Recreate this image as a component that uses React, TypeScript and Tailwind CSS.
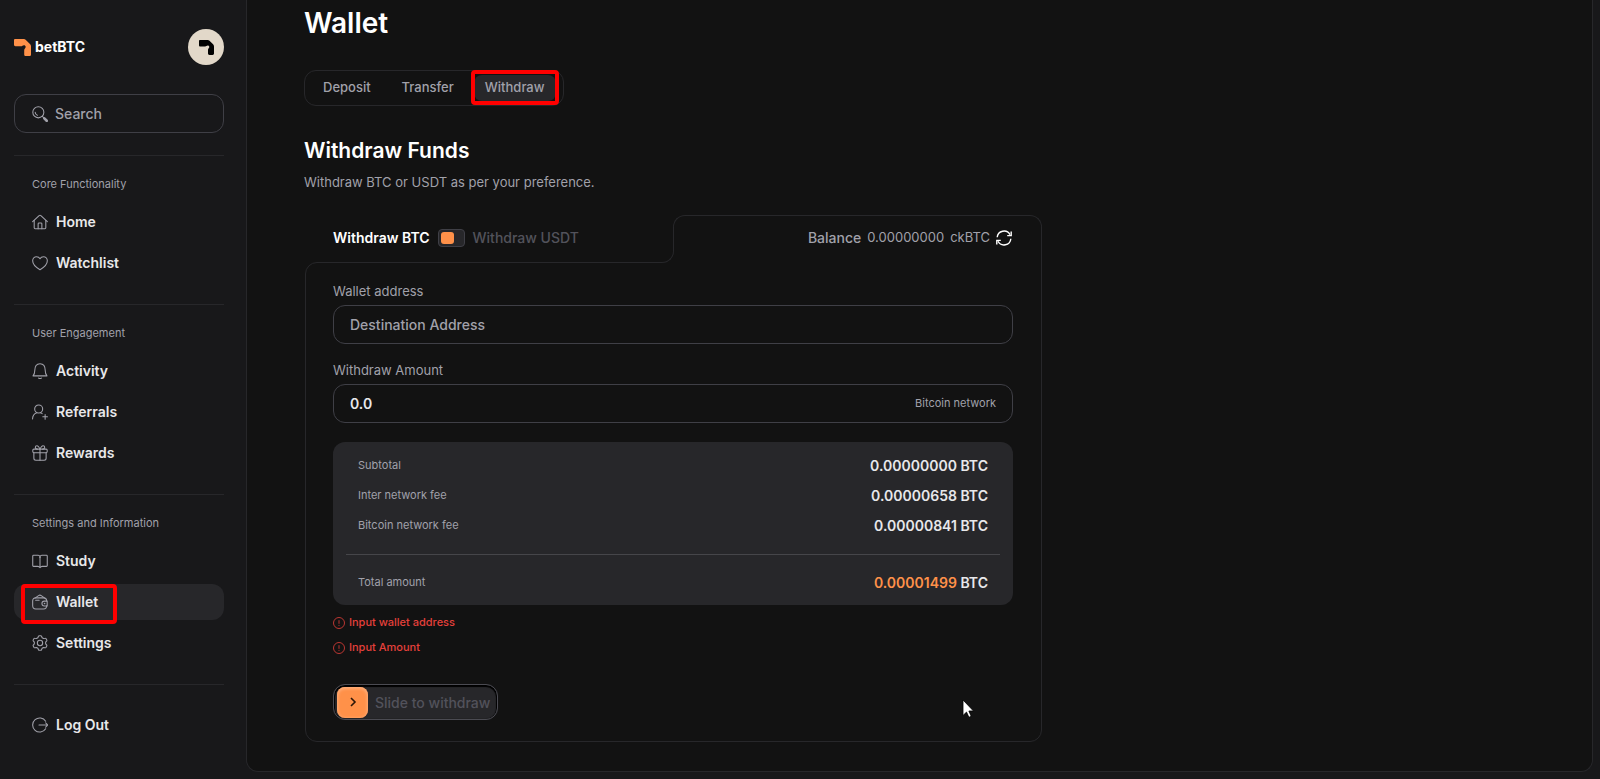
import type { ReactNode } from "react";

type IconProps = { className?: string };

function Stroke({ className = "size-4", children }: IconProps & { children: ReactNode }) {
  return (
    <svg
      viewBox="0 0 24 24"
      fill="none"
      stroke="currentColor"
      strokeWidth="1.6"
      strokeLinecap="round"
      strokeLinejoin="round"
      aria-hidden="true"
      className={`${className} shrink-0`}
    >
      {children}
    </svg>
  );
}

const HomeIcon = () => (
  <Stroke>
    <path d="M1 11.5 10.7 2.4a2 2 0 0 1 2.6 0L23 11.5" />
    <path d="M3.3 9.6V20.8c0 .8.6 1.4 1.4 1.4h14.6c.8 0 1.4-.6 1.4-1.4V9.6" />
    <path d="M9.2 22v-7.200c0-.8.6-1.4 1.4-1.4h2.800c.8 0 1.4.6 1.4 1.4V22" />
  </Stroke>
);
const HeartIcon = () => (
  <Stroke>
    <path d="M12 22C8.500 20 1 14.800 1 8.600 1 5.200 3.600 2.500 6.800 2.500c2.200 0 4.200 1.200 5.200 3.100 1-1.900 3-3.100 5.200-3.100 3.200 0 5.800 2.700 5.800 6.100 0 6.200-7.500 11.400-11 13.400Z" />
  </Stroke>
);
const BellIcon = () => (
  <Stroke>
    <path d="M1.500 19.300h21c-2-2-2.700-4.500-2.700-8.300C19.800 5 17.400 1 12 1S4.200 5 4.200 11c0 3.800-.7 6.300-2.700 8.300Z" />
    <path d="M9.800 22.600c1.300.9 3.100.9 4.400 0" />
  </Stroke>
);
const ReferIcon = () => (
  <Stroke>
    <circle cx="10" cy="7.500" r="6" />
    <path d="M.800 22.500c.2-5 3-8 6.400-9.200M12.800 13.300c.9.300 1.700.7 2.400 1.200" />
    <path d="M19.700 15.700v7M16.200 19.200h7" />
  </Stroke>
);
const GiftIcon = () => (
  <Stroke>
    <path d="M2.800 11.500v8.300c0 1.700 1.300 3 3 3h12.400c1.700 0 3-1.300 3-3v-8.300" />
    <rect x="1.200" y="6.200" width="21.600" height="5.300" rx="1.600" />
    <path d="M12 6.200v16.600" />
    <path d="M12 6.200C10.500 2.500 9 1 7.400 1 5.800 1 5 2.100 5 3.300c0 1.700 1.300 2.900 3 2.900M12 6.200C13.500 2.500 15 1 16.600 1 18.200 1 19 2.100 19 3.300c0 1.700-1.300 2.900-3 2.900" />
  </Stroke>
);
const BookIcon = () => (
  <Stroke>
    <path d="M12 6.500c0-1.800-1.300-3-3-3H2.300c-.7 0-1.200.5-1.200 1.200v14.200c0 .7.5 1.200 1.200 1.200h6.200c1.900 0 3 .6 3.500 1.900.5-1.300 1.600-1.900 3.500-1.900h6.200c.7 0 1.200-.5 1.200-1.200V4.700c0-.7-.5-1.200-1.200-1.200H15c-1.700 0-3 1.200-3 3Z" />
    <path d="M12 6.500V21" />
  </Stroke>
);
const WalletIcon = () => (
  <Stroke>
    <path d="M22 10.500c0-3-1.700-4.700-4.700-4.700H5.700C2.700 5.800 1 7.500 1 10.500v7.300c0 3 1.700 4.700 4.700 4.700h11.600c3 0 4.700-1.700 4.700-4.700" />
    <path d="M5 5.800 9.800 2.400c1.200-.8 2.900-.8 4.100 0l4.700 3.400M5.500 9.500h5.200" />
    <path d="M22.800 10.700h-4.300a3.600 3.600 0 0 0 0 7.200h4.300Z" />
    <path d="M18.800 14.300h.1" strokeWidth="2.400" />
  </Stroke>
);
const GearIcon = () => (
  <Stroke>
    <circle cx="12" cy="12" r="4" />
    <path d="M9.700 1.800c.2-.5.700-.8 1.200-.8h2.200c.5 0 1 .3 1.200.8l.9 2.300 2.100 1.200 2.500-.4c.5-.1 1 .2 1.300.6l1.100 1.900c.3.500.2 1-.1 1.400L20.500 10.800v2.400l1.600 2c.3.400.4.900.1 1.400l-1.100 1.900c-.3.400-.8.700-1.300.6l-2.500-.4-2.100 1.200-.9 2.300c-.2.500-.7.800-1.200.8h-2.200c-.5 0-1-.3-1.200-.8l-.9-2.300-2.100-1.200-2.500.4c-.5.100-1-.2-1.300-.6l-1.100-1.900c-.3-.5-.2-1 .1-1.400l1.600-2v-2.400l-1.600-2c-.3-.4-.4-.9-.1-1.400l1.100-1.900c.3-.4.800-.7 1.300-.6l2.500.4 2.100-1.200Z" />
  </Stroke>
);
const LogOutIcon = () => (
  <Stroke>
    <path d="M20.500 6.300A10.600 10.600 0 1 0 20.500 17.700" />
    <path d="M10.500 12h13M20.500 8.700l3.200 3.300-3.200 3.300" />
  </Stroke>
);
const SearchIcon = () => (
  <Stroke>
    <circle cx="9.500" cy="9.500" r="8.300" />
    <path d="M4.800 9.500a4.700 4.700 0 0 0 3.200 4.500" />
    <path d="m15.500 15.500 2 2" />
    <path d="m18.500 18.500 3.600 3.600" strokeWidth="4" />
  </Stroke>
);

function Mark({ className }: IconProps) {
  return (
    <svg viewBox="0 0 18 18" fill="currentColor" aria-hidden="true" className={className}>
      <path d="M1 0h9.500c.7 0 1.300.2 1.800.7l4.600 4.500c.7.7 1.100 1.500 1.100 2.500v8.600c0 1-.7 1.700-1.700 1.700h-3.800c-1 0-1.700-.7-1.700-1.700v-4.300c0-.9.300-1.400.8-2 .9-1 1-2.200.2-2.900-.8-.7-2-.6-2.900.1-.5.400-.9.500-1.500.5H1.500C.6 7.700 0 7.100 0 6.200V1c0-.6.4-1 1-1Z" />
    </svg>
  );
}

const redBox = "pointer-events-none absolute rounded border-4 border-[#ff0000]";

type Item = { name: string; icon: ReactNode; active?: boolean };

const sections: { title: string; items: Item[] }[] = [
  {
    title: "Core Functionality",
    items: [
      { name: "Home", icon: <HomeIcon /> },
      { name: "Watchlist", icon: <HeartIcon /> },
    ],
  },
  {
    title: "User Engagement",
    items: [
      { name: "Activity", icon: <BellIcon /> },
      { name: "Referrals", icon: <ReferIcon /> },
      { name: "Rewards", icon: <GiftIcon /> },
    ],
  },
  {
    title: "Settings and Information",
    items: [
      { name: "Study", icon: <BookIcon /> },
      { name: "Wallet", icon: <WalletIcon />, active: true },
      { name: "Settings", icon: <GearIcon /> },
    ],
  },
];

function NavItem({ name, icon, active }: Item) {
  return (
    <a
      href="#"
      aria-current={active ? "page" : undefined}
      className={`relative flex h-9 items-center gap-2 rounded-xl pl-[18px] text-[14px] leading-5 font-semibold text-[#e8e8ea] ${active ? "bg-[#27272a]" : ""}`}
    >
      <span className="text-[#a1a1aa]">{icon}</span>
      {name}
      {active && <span className={`${redBox} -bottom-1 left-[7px] top-0 w-24`} />}
    </a>
  );
}

function Sidebar() {
  return (
    <aside className="w-[246px] shrink-0 pl-3.5 pr-[22px] pt-[29px]">
      <div className="flex items-center justify-between">
        <a href="#" className="flex items-center gap-1 text-[14px] leading-5 font-bold text-white">
          <Mark className="size-[17px] text-[#ff9149]" />
          betBTC
        </a>
        <button aria-label="Account" className="flex size-9 items-center justify-center rounded-full bg-[#e2d8c9] text-black">
          <Mark className="size-[15px]" />
        </button>
      </div>
      <label className="mt-[29px] flex h-[39px] items-center gap-[7px] rounded-xl border border-[#3f3f46] pl-[17px] text-[#a1a1aa]">
        <SearchIcon />
        <input
          type="search"
          aria-label="Search"
          placeholder="Search"
          className="w-full min-w-0 bg-transparent text-[14px] font-medium outline-none placeholder:text-[#a1a1aa]"
        />
      </label>
      <nav className="mt-[22px]">
        {sections.map((s) => (
          <section key={s.title} className="border-t border-[#27272a] pb-[23px] pt-5">
            <h2 className="mb-[11px] pl-[18px] text-[11px] leading-[17px] text-[#a1a1aa]">{s.title}</h2>
            <div className="flex flex-col gap-[5px]">
              {s.items.map((i) => (
                <NavItem key={i.name} {...i} />
              ))}
            </div>
          </section>
        ))}
        <div className="border-t border-[#27272a] pt-[22px]">
          <NavItem name="Log Out" icon={<LogOutIcon />} />
        </div>
      </nav>
    </aside>
  );
}

function Tabs() {
  return (
    <div role="tablist" className="mt-[31px] flex h-9 w-fit items-center gap-[9px] rounded-xl border border-[#27272a] px-[7px] text-[13px] font-medium text-[#a1a1aa]">
      <button role="tab" className="h-[26px] rounded-lg px-[11px]">Deposit</button>
      <button role="tab" className="h-[26px] rounded-lg px-[11px]">Transfer</button>
      <button role="tab" aria-selected="true" className="relative h-[26px] rounded-lg bg-[#27272a] px-[11px]">
        Withdraw
        <span className={`${redBox} -inset-x-[3px] -bottom-1 -top-[5px]`} />
      </button>
    </div>
  );
}

const fees = [
  { label: "Subtotal", value: "0.00000000" },
  { label: "Inter network fee", value: "0.00000658" },
  { label: "Bitcoin network fee", value: "0.00000841" },
];

function Row({ label, value, accent }: { label: string; value: string; accent?: boolean }) {
  return (
    <div className="flex h-[30px] items-center justify-between px-3">
      <dt className="text-[11px] text-[#a1a1aa]">{label}</dt>
      <dd className="text-[14px] font-semibold text-[#e8e8ea]">
        <span className={accent ? "text-[#ff9149]" : ""}>{value}</span> BTC
      </dd>
    </div>
  );
}

function FormError({ children }: { children: ReactNode }) {
  return (
    <p className="flex h-[25px] items-center gap-1 text-[11px] font-medium text-[#e5403b]">
      <svg viewBox="0 0 12 12" fill="none" stroke="currentColor" strokeWidth="0.8" aria-hidden="true" className="size-3">
        <circle cx="6" cy="6" r="5.500" />
        <path d="M6 3.200v3.600M6 7.900v1" />
      </svg>
      {children}
    </p>
  );
}

function WithdrawCard() {
  return (
    <form className="ml-px mt-[23px] max-w-[737px]">
      <div className="flex h-[47px]">
        <div className="flex flex-1 items-end">
          <div className="flex h-full flex-1 items-center pb-0.5 pl-7 text-[14px]">
            <span className="font-semibold text-white">Withdraw BTC</span>
            <button
              type="button"
              role="switch"
              aria-checked="false"
              aria-label="Withdraw USDT"
              className="mx-2 flex h-[18px] w-[27px] items-center rounded border border-[#3f3f46] bg-[#27272a] pl-0.5"
            >
              <span className="h-3 w-[13px] rounded-[3px] bg-[#ff9149]" />
            </button>
            <span className="font-medium text-[#52525b]">Withdraw USDT</span>
          </div>
          <span className="relative -mb-px size-3 shrink-0 bg-[#121212]">
            <span className="block size-3 rounded-br-xl border-b border-r border-[#27272a]" />
          </span>
        </div>
        <div className="relative -mb-px -ml-px flex flex-1">
          <span className="flex w-3 shrink-0 flex-col">
            <span className="h-9 rounded-tl-xl border-l border-t border-[#27272a]" />
            <span className="ml-px flex-1 bg-[#121212]" />
          </span>
          <div className="flex flex-1 items-center justify-end gap-1.5 rounded-tr-xl border-r border-t border-[#27272a] bg-[#121212] pb-1 pr-[29px] text-[#a1a1aa]">
            <span className="text-[14px] font-medium">Balance</span>
            <span className="flex gap-1.5 text-[13px]">
              <span>0.00000000</span>
              <span>ckBTC</span>
            </span>
            <button type="button" aria-label="Refresh balance" className="text-white">
              <svg viewBox="0 0 16 16" fill="none" stroke="currentColor" strokeWidth="1.400" aria-hidden="true" className="size-4">
                <path d="M1.200 7.300A6.800 6.800 0 0 1 14 4.700M14.800 8.700A6.800 6.800 0 0 1 2 11.300" />
                <path d="M15.200 1.600v4h-4M.800 14.400v-4h4" />
              </svg>
            </button>
          </div>
        </div>
      </div>
      <div className="rounded-b-xl rounded-tl-xl border border-[#27272a] pb-[21px] pl-[27px] pr-7 pt-[18px]">
        <label htmlFor="address" className="block text-[13px] leading-5 text-[#a1a1aa]">Wallet address</label>
        <input
          id="address"
          placeholder="Destination Address"
          className="mt-1 block h-[39px] w-full rounded-xl border border-[#3f3f46] bg-transparent px-4 text-[14px] font-medium text-[#e8e8ea] outline-none placeholder:text-[#a1a1aa]"
        />
        <label htmlFor="amount" className="mt-4 block text-[13px] leading-5 text-[#a1a1aa]">Withdraw Amount</label>
        <div className="mt-1 flex h-[39px] items-center rounded-xl border border-[#3f3f46] px-4">
          <input id="amount" defaultValue="0.0" className="min-w-0 flex-1 bg-transparent text-[14px] font-semibold text-[#e8e8ea] outline-none" />
          <span className="text-[11px] text-[#a1a1aa]">Bitcoin network</span>
        </div>
        <dl className="mt-[19px] rounded-xl bg-[#27272a] px-[13px] py-2">
          {fees.map((f) => (
            <Row key={f.label} {...f} />
          ))}
          <div className="mb-3 mt-3.5 border-t border-[#46464a]" />
          <Row label="Total amount" value="0.00001499" accent />
        </dl>
        <div className="mt-[5px]">
          <FormError>Input wallet address</FormError>
          <FormError>Input Amount</FormError>
        </div>
        <button
          type="button"
          className="mt-6 flex h-9 items-center gap-[7px] rounded-xl border border-[#4b4b52] bg-[#27272a] pl-[3px] pr-[7px] text-[14px] font-medium text-[#52525b] shadow-[inset_0_1px_1px_1px_#000000]"
        >
          <span className="flex size-[31px] items-center justify-center rounded-lg bg-[#ff9149] text-[#2b1608] shadow-[inset_0_1px_3px_1px_#ffad78]">
            <svg viewBox="0 0 12 12" fill="none" stroke="currentColor" strokeWidth="1.600" aria-hidden="true" className="size-3">
              <path d="M4 2l4 4-4 4" />
            </svg>
          </span>
          Slide to withdraw
        </button>
      </div>
    </form>
  );
}

export default function App() {
  return (
    <div className="relative flex min-h-screen bg-[#18181a] font-['Inter',sans-serif]">
      <Sidebar />
      <main className="mb-2 mr-[7px] min-w-0 flex-1 rounded-b-xl border border-t-0 border-[#27272a] bg-[#121212] pb-[29px] pl-[57px] pr-6 pt-2">
        <h1 className="text-[28px] font-semibold leading-[31px] text-white">Wallet</h1>
        <Tabs />
        <h2 className="mt-[31px] text-[21px] font-semibold leading-7 text-white">Withdraw Funds</h2>
        <p className="mt-[7px] text-[13px] leading-5 text-[#a1a1aa]">Withdraw BTC or USDT as per your preference.</p>
        <WithdrawCard />
      </main>
      <svg viewBox="0 0 12 19" aria-hidden="true" className="pointer-events-none absolute left-[962px] top-[699px] h-[19px] w-3">
        <path d="M1 1v15.500l3.500-3.400 2.400 5.200 2.300-1L6.900 12h4.600Z" fill="#fff" stroke="#000" strokeWidth="0.800" />
      </svg>
    </div>
  );
}
